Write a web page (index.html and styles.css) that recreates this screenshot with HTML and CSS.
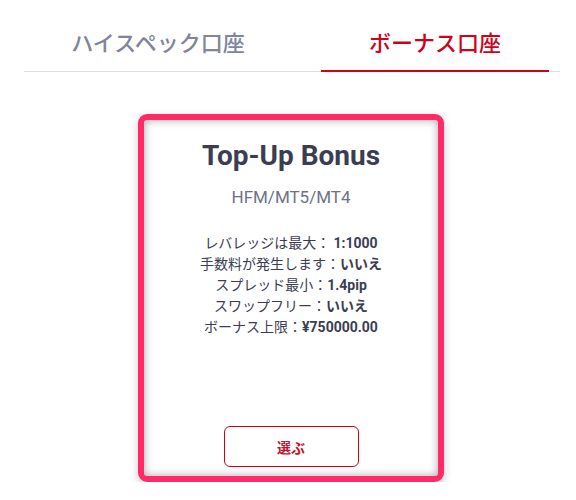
FILE: index.html
```html
<!DOCTYPE html>
<html lang="ja">
<head>
<meta charset="utf-8">
<link rel="stylesheet" href="styles.css">
</head>
<body>
<div class="tabs">
  <div class="tab tab-left">ハイスペック口座</div>
  <div class="tab tab-active">ボーナス口座</div>
</div>
<div class="main">
  <div class="card">
    <h2 class="title">Top-Up Bonus</h2>
    <div class="platform">HFM/MT5/MT4</div>
    <div class="details">
      <div>レバレッジは最大： <b>1:1000</b></div>
      <div>手数料が発生します：<b>いいえ</b></div>
      <div>スプレッド最小：<b>1.4pip</b></div>
      <div>スワップフリー：<b>いいえ</b></div>
      <div>ボーナス上限：<b>¥750000.00</b></div>
    </div>
    <button class="btn">選ぶ</button>
  </div>
</div>
</body>
</html>
```
FILE: styles.css
```css
* { box-sizing: border-box; }
html, body { margin: 0; padding: 0; background: #fff; }
body {
  font-family: Roboto, "Noto Sans CJK JP", sans-serif;
  width: 576px;
}
.tabs {
  display: flex;
  margin: 0 16px 0 24px;
  border-bottom: 1px solid #dedee2;
}
.tab {
  font-family: "Noto Sans CJK JP", sans-serif;
  font-size: 22px;
  font-weight: 500;
  line-height: 30px;
  padding: 26px 0 14px;
  text-align: center;
  border-bottom: 2px solid transparent;
  margin-bottom: -1px;
}
.tab-left {
  width: 268px;
  color: #80859a;
}
.tab-active {
  width: 228px;
  margin-left: 29px;
  color: #d0021b;
  border-bottom-color: #d0021b;
}
.main {
  padding-top: 42px;
  padding-left: 138px;
}
.card {
  width: 306px;
  height: 368px;
  border: 6px solid #ff2a67;
  border-radius: 9px;
  box-shadow: inset 0 0 8px rgba(0,0,0,0.35), 0 3px 8px rgba(0,0,0,0.22);
  display: flex;
  flex-direction: column;
  align-items: center;
  padding: 21px 0 9px;
}
.title {
  margin: 0;
  font-size: 28px;
  line-height: 30px;
  font-weight: 700;
  color: #3b3e52;
}
.platform {
  margin-top: 14px;
  font-size: 17px;
  line-height: 24px;
  color: #6d7285;
}
.details {
  margin-top: 23px;
  font-size: 14px;
  color: #3b3e52;
  text-align: center;
  font-family: "Noto Sans CJK JP", sans-serif;
}
.details > div {
  line-height: 21px;
  height: 21px;
}
.details b {
  font-family: Roboto, "Noto Sans CJK JP", sans-serif;
  font-weight: 700;
  line-height: 0;
}
.btn {
  margin-top: auto;
  width: 135px;
  height: 41px;
  background: #fff;
  border: 1px solid #d0021b;
  border-radius: 6px;
  color: #c4102b;
  font-family: "Noto Sans CJK JP", sans-serif;
  font-size: 14px;
  font-weight: 700;
  padding: 0;
}
```
